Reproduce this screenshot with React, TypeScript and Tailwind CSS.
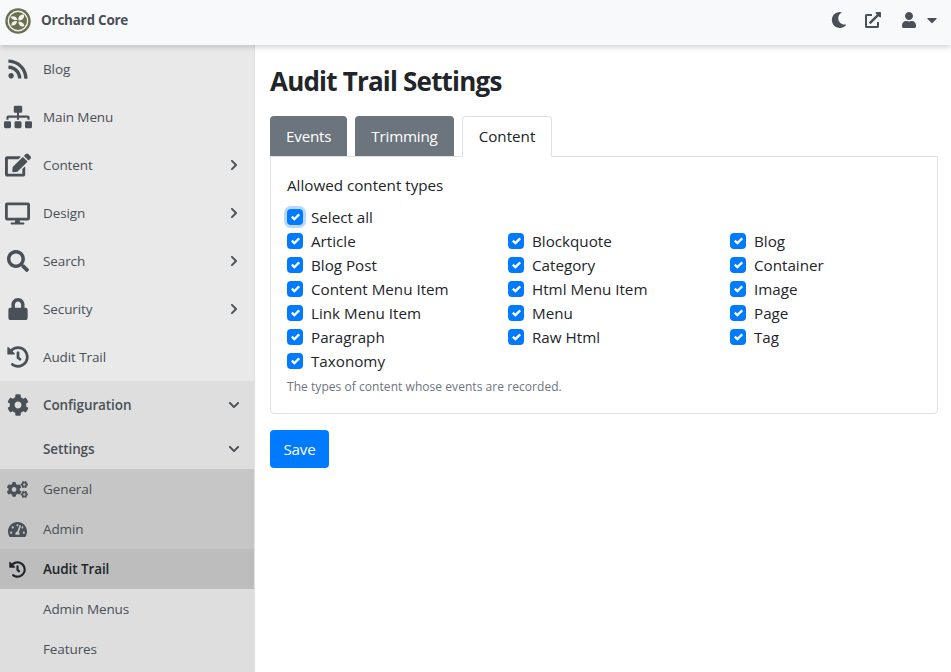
import React from "react";
import {
  FaRss, FaSitemap, FaEdit, FaDesktop, FaSearch, FaLock, FaHistory, FaCog, FaCogs,
  FaTachometerAlt, FaMoon, FaExternalLinkAlt, FaUser, FaCaretDown, FaChevronRight, FaChevronDown,
} from "react-icons/fa";

const font = "font-['Open_Sans','Noto_Sans',sans-serif]";

function Logo() {
  return (
    <svg width="26" height="26" viewBox="0 0 26 26" className="shrink-0 mt-[2px]">
      <circle cx="13" cy="13" r="12.7" fill="#6b6f52" />
      <circle cx="13" cy="13" r="10.4" fill="#f2f3ee" />
      <circle cx="13" cy="13" r="9" fill="#6b6f52" />
      <path d="M13.4 12.4C12.8 8.8 15 6.4 19 6.6 19.6 10.4 17 12.9 13.4 12.4Z" fill="#f2f3ee" />
      <path d="M12.3 12C8.8 12.3 6.6 11 5.6 8.9 8 7.4 12 8 12.3 12Z" fill="#f2f3ee" />
      <path d="M12 13.2C11.6 16.2 9.4 18 6.4 17.4 6.2 14.6 8.6 12.6 12 13.2Z" fill="#f2f3ee" />
      <path d="M13.4 13.8C16.6 13.2 19 15 19.4 18 16.4 19.6 13.6 17.6 13.4 13.8Z" fill="#f2f3ee" />
    </svg>
  );
}

type Item = { label: string; icon?: React.ElementType; arrow?: "r" | "d"; size?: number };

const top: Item[] = [
  { label: "Blog", icon: FaRss },
  { label: "Main Menu", icon: FaSitemap, size: 28 },
  { label: "Content", icon: FaEdit, arrow: "r", size: 26 },
  { label: "Design", icon: FaDesktop, arrow: "r", size: 25 },
  { label: "Search", icon: FaSearch, arrow: "r" },
  { label: "Security", icon: FaLock, arrow: "r" },
  { label: "Audit Trail", icon: FaHistory },
];

function Row({ item, h, tone, bold, iconSize }: { item: Item; h: string; tone?: string; bold?: boolean; iconSize?: number }) {
  const Icon = item.icon;
  return (
    <div className={`flex items-center ${h} ${tone ?? ""}`}>
      <span className="flex w-[35px] justify-center shrink-0 text-[#495057]">
        {Icon && <Icon size={iconSize ?? item.size ?? 22} />}
      </span>
      <span className={`ml-2 flex-1 text-[13.5px] tracking-[-0.1px] ${bold ? "font-semibold" : ""} text-[#495057]`}>{item.label}</span>
      {item.arrow === "r" && <FaChevronRight size={12} className="mr-[14px] text-[#495057]" />}
      {item.arrow === "d" && <FaChevronDown size={12} className="mr-[14px] text-[#495057]" />}
    </div>
  );
}

function Check({ label, focus }: { label: string; focus?: boolean }) {
  return (
    <div className="flex items-center h-6">
      <span className={`flex items-center justify-center w-4 h-4 rounded-[4px] bg-[#007bff] ${focus ? "shadow-[0_0_0_3px_#b8d8ff]" : ""}`}>
        <svg width="9" height="9" viewBox="0 0 8 8"><path d="M6.56.44 3 4.01 1.44 2.45 0 3.89l3 3 5-5z" fill="#fff" /></svg>
      </span>
      <span className="ml-2 text-[15.2px] text-[#212529]">{label}</span>
    </div>
  );
}

const types = ["Article", "Blockquote", "Blog", "Blog Post", "Category", "Container", "Content Menu Item", "Html Menu Item", "Image", "Link Menu Item", "Menu", "Page", "Paragraph", "Raw Html", "Tag", "Taxonomy"];

export default function App() {
  return (
    <div className={`h-[672px] w-[951px] overflow-hidden flex flex-col bg-white ${font}`}>
      <header className="relative z-10 h-[45px] shrink-0 flex items-center bg-[#f8f9fa] shadow-[0_2px_6px_rgba(0,0,0,0.18)] pl-[5px] pr-[11px] pb-[5px]">
        <Logo />
        <span className="ml-[10px] text-[13.5px] font-bold tracking-[-0.25px] text-[#495057]">Orchard Core</span>
        <div className="ml-auto flex items-center text-[#495057]">
          <FaMoon size={16} />
          <FaExternalLinkAlt size={16} className="ml-[18px]" />
          <FaUser size={16} className="ml-[20px]" />
          <FaCaretDown size={16} className="ml-[7px]" />
        </div>
      </header>
      <div className="flex flex-1 min-h-0">
        <aside className="w-[255px] shrink-0 bg-[#e9e9e9] border-r border-[#dee2e6]">
          {top.map((i) => <Row key={i.label} item={i} h="h-12" />)}
          <div className="bg-[#dedede] h-[300px]">
            <Row item={{ label: "Configuration", icon: FaCog, arrow: "d" }} h="h-12" bold />
            <Row item={{ label: "Settings", arrow: "d" }} h="h-10" bold />
            <Row item={{ label: "General", icon: FaCogs }} h="h-10" tone="bg-[#c6c6c6]" iconSize={21} />
            <Row item={{ label: "Admin", icon: FaTachometerAlt }} h="h-10" tone="bg-[#c6c6c6]" iconSize={19} />
            <div className="flex items-center h-10 bg-[#bdbdbd]">
              <span className="flex w-[35px] justify-center shrink-0 text-[#212529]"><FaHistory size={17} /></span>
              <span className="ml-2 text-[13.5px] tracking-[-0.1px] font-semibold text-[#212529]">Audit Trail</span>
            </div>
            <Row item={{ label: "Admin Menus" }} h="h-10" />
            <Row item={{ label: "Features" }} h="h-10" />
          </div>
        </aside>
        <main className="flex-1 min-w-0 pl-[15px] pr-[13px]">
          <h1 className="mt-[16px] text-[26px] leading-[40px] font-bold text-[#212529] tracking-[-0.8px]">Audit Trail Settings</h1>
          <div className="mt-[15px] flex gap-2 h-[40px] items-end">
            <div className="h-[40px] px-4 flex items-center rounded-t-[4px] bg-[#6c757d] text-white text-[15.2px] tracking-[-0.2px]">Events</div>
            <div className="h-[40px] px-4 flex items-center rounded-t-[4px] bg-[#6c757d] text-white text-[15.2px] tracking-[-0.2px]">Trimming</div>
            <div className="relative z-10 h-[41px] -mb-px px-4 flex items-center rounded-t-[4px] border border-[#dee2e6] border-b-white bg-white text-[#212529] text-[15.2px]">Content</div>
          </div>
          <section className="border border-[#dee2e6] rounded-b-[4px] h-[258px] px-4 pt-4">
            <div className="text-[15.2px] text-[#212529] leading-6 mb-2">Allowed content types</div>
            <Check label="Select all" focus />
            <div className="grid grid-cols-[221px_222px_1fr]">
              {types.map((t) => <Check key={t} label={t} />)}
            </div>
            <p className="mt-[5px] text-[12px] leading-[18px] tracking-[0.05px] text-[#6c757d]">The types of content whose events are recorded.</p>
          </section>
          <button className="mt-4 h-[38px] w-[59px] rounded-[4px] bg-[#007bff] text-white text-[15.2px] tracking-[-0.2px]">Save</button>
        </main>
      </div>
    </div>
  );
}
